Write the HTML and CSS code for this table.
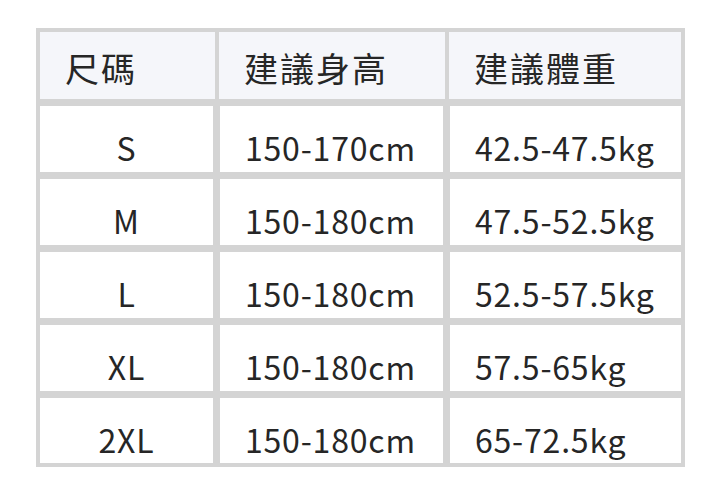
FILE: index.html
```html
<!DOCTYPE html>
<html lang="zh-Hant">
<head>
<meta charset="utf-8">
<link rel="stylesheet" href="styles.css">
</head>
<body>
<div class="size-table">
  <div class="row head">
    <div class="cell">尺碼</div>
    <div class="cell">建議身高</div>
    <div class="cell">建議體重</div>
  </div>
  <div class="row body">
    <div class="cell size">S</div>
    <div class="cell">150-170cm</div>
    <div class="cell">42.5-47.5kg</div>
  </div>
  <div class="row body">
    <div class="cell size">M</div>
    <div class="cell">150-180cm</div>
    <div class="cell">47.5-52.5kg</div>
  </div>
  <div class="row body">
    <div class="cell size">L</div>
    <div class="cell">150-180cm</div>
    <div class="cell">52.5-57.5kg</div>
  </div>
  <div class="row body">
    <div class="cell size">XL</div>
    <div class="cell">150-180cm</div>
    <div class="cell">57.5-65kg</div>
  </div>
  <div class="row body last">
    <div class="cell size">2XL</div>
    <div class="cell">150-180cm</div>
    <div class="cell">65-72.5kg</div>
  </div>
</div>
</body>
</html>
```
FILE: styles.css
```css
html, body {
  margin: 0;
  background: #ffffff;
}
body {
  padding: 28px 0 0 36px;
  font-family: "Noto Sans CJK TC", "Noto Sans", sans-serif;
  color: #262626;
}
.size-table {
  width: 641px;
  padding: 4px;
  background: #d4d4d4;
  display: flex;
  flex-direction: column;
  gap: 7px;
}
.row {
  display: grid;
}
.head {
  grid-template-columns: 175px 226px 232px;
  column-gap: 4px;
  height: 67px;
}
.body {
  grid-template-columns: 173px 223px 231px;
  column-gap: 7px;
  height: 66px;
}
.body.last {
  height: 65px;
}
.cell {
  font-size: 32px;
  line-height: 32px;
  padding-left: 25px;
  letter-spacing: 0.8px;
  white-space: nowrap;
}
.head .cell {
  background: #f5f6fa;
  font-size: 34px;
  letter-spacing: 2px;
  padding-top: 20px;
}
.body .cell {
  background: #ffffff;
  padding-top: 25px;
}
.body .cell.size {
  padding-left: 0;
  text-align: center;
}
```
